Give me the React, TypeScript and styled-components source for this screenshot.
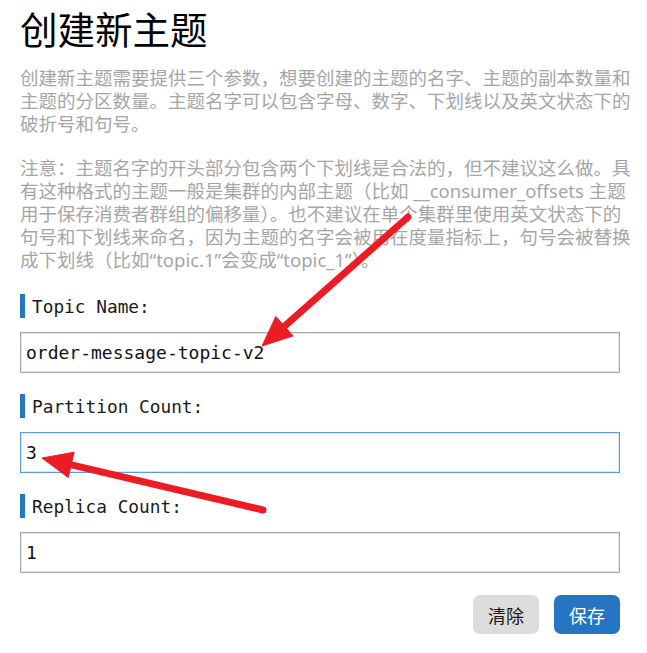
import styled, { createGlobalStyle } from 'styled-components';

const GlobalStyle = createGlobalStyle`
  html, body {
    margin: 0;
    padding: 0;
    background: #ffffff;
  }
  body {
    font-family: "Noto Sans", "Noto Sans CJK SC", sans-serif;
  }
`;

/* 页面整体 */
const Page = styled.div`
  position: relative;
  width: 647px;
  box-sizing: border-box;
  padding: 6px 27px 0 20px;
`;

const Title = styled.h1`
  margin: 0;
  font-family: "Noto Sans CJK SC", sans-serif;
  font-size: 37.5px;
  line-height: 44px;
  font-weight: 400;
  color: #000;
`;

const Intro = styled.p<{ $first?: boolean }>`
  margin: ${(p) => (p.$first ? '16px 0 0' : '21px 0 0')};
  font-size: 18.5px;
  line-height: 23px;
  color: #a6a6a6;
  white-space: nowrap;
`;

const Form = styled.div`
  margin-top: 23px;
  display: flex;
  flex-direction: column;
  gap: 21px;
`;

const Field = styled.div`
  display: flex;
  flex-direction: column;
  gap: 14px;
`;

/* 左边带蓝色竖条的标签 */
const Label = styled.label`
  display: flex;
  align-items: center;
  gap: 7px;
  height: 24px;
  font-family: "DejaVu Sans Mono", "Liberation Mono", monospace;
  font-size: 17.8px;
  color: #1a1a1a;

  &::before {
    content: '';
    width: 5px;
    height: 24px;
    background: #2675c3;
  }
`;

const TextInput = styled.input<{ $focused?: boolean }>`
  box-sizing: border-box;
  width: 100%;
  height: 41px;
  padding: 0 5px;
  margin: 0;
  font-family: "DejaVu Sans Mono", "Liberation Mono", monospace;
  font-size: 18px;
  color: #111;
  background: #fff;
  outline: none;
  border: 1px solid ${(p) => (p.$focused ? '#5d9ddd' : '#acacac')};
  box-shadow: inset 0 0 0 1px ${(p) => (p.$focused ? '#d9e7f6' : '#e3e3e3')};
`;

const Actions = styled.div`
  margin-top: 22px;
  display: flex;
  justify-content: flex-end;
  gap: 15px;
`;

const Button = styled.button<{ $primary?: boolean }>`
  width: 66px;
  height: 39px;
  border: none;
  border-radius: 7px;
  font-family: "Noto Sans CJK SC", sans-serif;
  font-size: 18px;
  color: ${(p) => (p.$primary ? '#fff' : '#1a1a1a')};
  background: ${(p) => (p.$primary ? '#2675c3' : '#dcdcdc')};
  cursor: pointer;
`;

/* 截图上的红色箭头标注 */
const Annotation = styled.svg`
  position: absolute;
  left: 0;
  top: 0;
  pointer-events: none;
`;

function Arrow({ x1, y1, x2, y2 }: { x1: number; y1: number; x2: number; y2: number }) {
  const dx = x2 - x1;
  const dy = y2 - y1;
  const len = Math.hypot(dx, dy);
  const ux = dx / len;
  const uy = dy / len;
  const headLen = 30;
  const headW = 13;
  const bx = x2 - ux * headLen;
  const by = y2 - uy * headLen;
  const px = -uy * headW;
  const py = ux * headW;
  return (
    <g fill="#ec1c24" stroke="#ec1c24">
      <line x1={x1} y1={y1} x2={bx + ux * 4} y2={by + uy * 4} strokeWidth={7} strokeLinecap="round" />
      <polygon points={`${x2},${y2} ${bx + px},${by + py} ${bx - px},${by - py}`} strokeWidth={1} strokeLinejoin="round" />
    </g>
  );
}

export default function App() {
  return (
    <>
      <GlobalStyle />
      <Page>
        <Title>创建新主题</Title>
        <Intro $first>
          创建新主题需要提供三个参数，想要创建的主题的名字、主题的副本数量和
          <br />
          主题的分区数量。主题名字可以包含字母、数字、下划线以及英文状态下的
          <br />
          破折号和句号。
        </Intro>
        <Intro>
          注意：主题名字的开头部分包含两个下划线是合法的，但不建议这么做。具
          <br />
          有这种格式的主题一般是集群的内部主题（比如 __consumer_offsets 主题
          <br />
          用于保存消费者群组的偏移量）。也不建议在单个集群里使用英文状态下的
          <br />
          句号和下划线来命名，因为主题的名字会被用在度量指标上，句号会被替换
          <br />
          成下划线（比如“topic.1”会变成“topic_1”）。
        </Intro>
        <Form>
          <Field>
            <Label>Topic Name:</Label>
            <TextInput defaultValue="order-message-topic-v2" />
          </Field>
          <Field>
            <Label>Partition Count:</Label>
            <TextInput $focused defaultValue="3" />
          </Field>
          <Field>
            <Label>Replica Count:</Label>
            <TextInput defaultValue="1" />
          </Field>
        </Form>
        <Actions>
          <Button>清除</Button>
          <Button $primary>保存</Button>
        </Actions>
        <Annotation width={647} height={653} viewBox="0 0 647 653">
          <Arrow x1={408} y1={217} x2={262} y2={346} />
          <Arrow x1={263} y1={510} x2={42} y2={458} />
        </Annotation>
      </Page>
    </>
  );
}
